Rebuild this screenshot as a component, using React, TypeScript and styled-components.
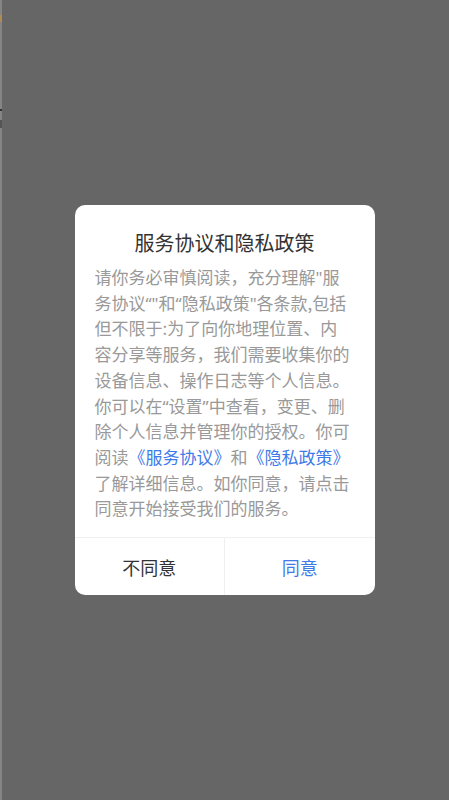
import React from 'react';
import styled, { createGlobalStyle } from 'styled-components';

const GlobalStyle = createGlobalStyle`
  html, body {
    margin: 0;
    padding: 0;
    height: 100%;
  }
  body {
    font-family: "Noto Sans CJK SC", "Noto Sans", sans-serif;
  }
  #root {
    height: 100%;
  }
`;

// dimmed page behind the dialog; a sliver of the app shows at the left edge
const Backdrop = styled.div`
  width: 100vw;
  height: 100vh;
  display: flex;
  align-items: center;
  justify-content: center;
  background:
    linear-gradient(to bottom, transparent 15px, #b08a5a 15px, #b08a5a 22px, transparent 22px),
    linear-gradient(to bottom, transparent 109px, #333 109px, #333 111px, transparent 111px, transparent 120px, #555 120px, #555 128px, transparent 128px),
    linear-gradient(to right, #858585 0, #858585 2px, #666666 2px);
  background-size: 2px 100%, 2px 100%, 100% 100%;
  background-repeat: no-repeat;
`;

const Dialog = styled.div`
  width: 300px;
  background-color: #ffffff;
  border-radius: 10px;
  overflow: hidden;
  display: flex;
  flex-direction: column;
`;

const Title = styled.div`
  padding-top: 24px;
  height: 28px;
  line-height: 28px;
  font-size: 20px;
  color: #333333;
  text-align: center;
`;

const Body = styled.div`
  margin-top: 7px;
  padding: 0 20px 16px 20px;
  font-size: 17px;
  line-height: 25.7px;
  color: #999999;
  white-space: nowrap;
`;

// western quote marks are narrow in the reference, not full-width
const Q = styled.span`
  font-family: "Noto Sans", "DejaVu Sans", sans-serif;
  line-height: 0;
`;

const Link = styled.span`
  color: #3f7be8;
`;

const ButtonRow = styled.div`
  display: flex;
  height: 57px;
  border-top: 1px solid #f0f0f0;
`;

const Button = styled.div<{ $primary?: boolean }>`
  flex: 1;
  display: flex;
  align-items: center;
  justify-content: center;
  font-size: 18px;
  color: ${(p) => (p.$primary ? '#3f7be8' : '#333333')};
  & + & {
    border-left: 1px solid #f0f0f0;
  }
`;

export default function App() {
  return (
    <>
      <GlobalStyle />
      <Backdrop>
        <Dialog>
          <Title>服务协议和隐私政策</Title>
          <Body>
            请你务必审慎阅读，充分理解<Q>"</Q>服
            <br />
            务协议<Q>“"</Q>和<Q>“</Q>隐私政策<Q>"</Q>各条款,包括
            <br />
            但不限于:为了向你地理位置、内
            <br />
            容分享等服务，我们需要收集你的
            <br />
            设备信息、操作日志等个人信息。
            <br />
            你可以在<Q>“</Q>设置<Q>”</Q>中查看，变更、删
            <br />
            除个人信息并管理你的授权。你可
            <br />
            阅读<Link>《服务协议》</Link>和<Link>《隐私政策》</Link>
            <br />
            了解详细信息。如你同意，请点击
            <br />
            同意开始接受我们的服务。
          </Body>
          <ButtonRow>
            <Button>不同意</Button>
            <Button $primary>同意</Button>
          </ButtonRow>
        </Dialog>
      </Backdrop>
    </>
  );
}
